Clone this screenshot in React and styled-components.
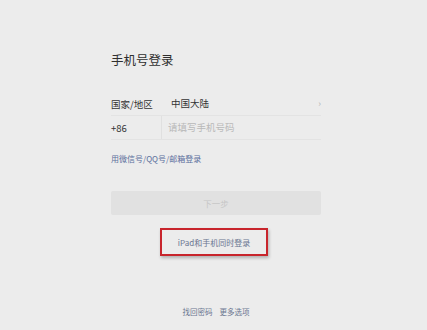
import styled, { createGlobalStyle } from 'styled-components';

const GlobalStyle = createGlobalStyle`
	html, body {
		margin: 0;
		padding: 0;
		background: #ececec;
	}
	body {
		font-family: "Noto Sans CJK SC", "Liberation Sans", sans-serif;
	}
`;

const Page = styled.div`
	width: 427px;
	height: 330px;
	background: #ececec;
	display: flex;
	flex-direction: column;
	align-items: center;
`;

const Panel = styled.div`
	width: 210px;
	margin-left: 5px;
	padding-top: 50px;
	display: flex;
	flex-direction: column;
`;

const Title = styled.h1`
	margin: 0;
	font-size: 12.5px;
	font-weight: 400;
	color: #2f2f2f;
	line-height: 20px;
`;

const Form = styled.div`
	margin-top: 22px;
	display: flex;
	flex-direction: column;
`;

const Row = styled.div`
	display: flex;
	align-items: center;
	height: 23px;
	border-bottom: 1px solid #e3e3e3;
	font-size: 9.5px;
	color: #333;
`;

const Label = styled.span`
	width: ${(p) => p.$width}px;
	flex-shrink: 0;
`;

const Value = styled.span`
	flex: 1;
	color: ${(p) => (p.$muted ? '#b9b9b9' : '#333')};
	padding-left: ${(p) => (p.$divided ? 6 : 0)}px;
	border-left: ${(p) => (p.$divided ? '1px solid #e0e0e0' : 'none')};
	line-height: 23px;
`;

const Chevron = styled.span`
	color: #b5b5b5;
	font-size: 9px;
`;

const Link = styled.a`
	margin-top: 12px;
	font-size: 8px;
	color: #5b6f9c;
	line-height: 14px;
	text-decoration: none;
`;

const NextButton = styled.div`
	margin-top: 25px;
	height: 24px;
	background: #e1e1e1;
	border-radius: 2px;
	display: flex;
	align-items: center;
	justify-content: center;
	font-size: 8.5px;
	color: #c6c6c6;
`;

const Highlight = styled.div`
	margin-top: 13px;
	align-self: center;
	width: 104px;
	height: 24px;
	border: 2px solid #c8252c;
	box-shadow: 1px 2px 3px rgba(0, 0, 0, 0.25);
	display: flex;
	align-items: center;
	justify-content: center;
	font-size: 8px;
	color: #6a7590;
	margin-left: -4px;
`;

const Footer = styled.div`
	margin-top: auto;
	margin-bottom: 13px;
	display: flex;
	gap: 7px;
	font-size: 7.5px;
	color: #6b7690;
	margin-left: 5px;
`;

export default function App() {
	return (
		<>
			<GlobalStyle />
			<Page>
				<Panel>
					<Title>手机号登录</Title>
					<Form>
						<Row>
							<Label $width={60}>国家/地区</Label>
							<Value>中国大陆</Value>
							<Chevron>›</Chevron>
						</Row>
						<Row>
							<Label $width={50}>+86</Label>
							<Value $muted $divided>请填写手机号码</Value>
						</Row>
					</Form>
					<Link>用微信号/QQ号/邮箱登录</Link>
					<NextButton>下一步</NextButton>
					<Highlight>iPad和手机同时登录</Highlight>
				</Panel>
				<Footer>
					<span>找回密码</span>
					<span>更多选项</span>
				</Footer>
			</Page>
		</>
	);
}
